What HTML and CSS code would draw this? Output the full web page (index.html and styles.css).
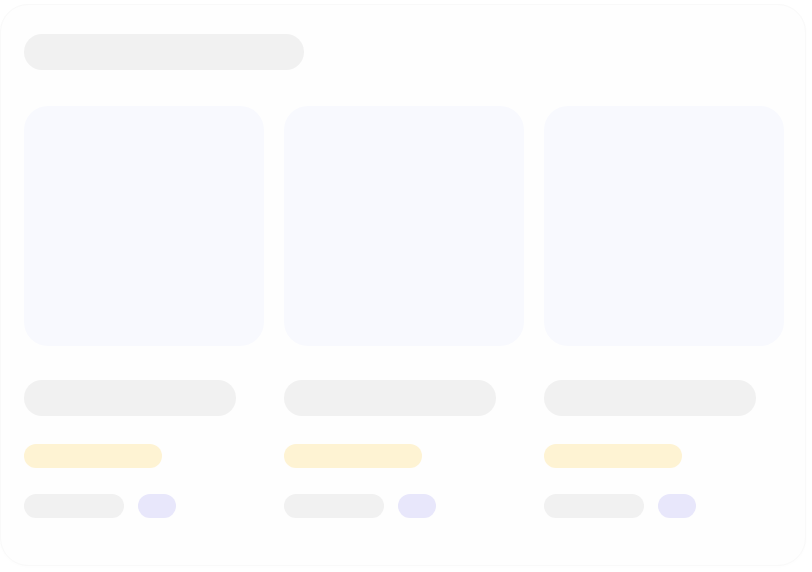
FILE: index.html
```html
<!DOCTYPE html>
<html lang="en">
<head>
    <meta charset="UTF-8">
    <title>Loading products</title>
    <link rel="stylesheet" href="styles.css">
</head>
<body>
    <div class="panel">
        <div class="skeleton heading-line"></div>

        <div class="product-grid">
            <div class="product-card">
                <div class="skeleton thumb"></div>
                <div class="skeleton name-line"></div>
                <div class="skeleton price-line"></div>
                <div class="meta-row">
                    <div class="skeleton meta-line"></div>
                    <div class="skeleton tag-pill"></div>
                </div>
            </div>
            <div class="product-card">
                <div class="skeleton thumb"></div>
                <div class="skeleton name-line"></div>
                <div class="skeleton price-line"></div>
                <div class="meta-row">
                    <div class="skeleton meta-line"></div>
                    <div class="skeleton tag-pill"></div>
                </div>
            </div>
            <div class="product-card">
                <div class="skeleton thumb"></div>
                <div class="skeleton name-line"></div>
                <div class="skeleton price-line"></div>
                <div class="meta-row">
                    <div class="skeleton meta-line"></div>
                    <div class="skeleton tag-pill"></div>
                </div>
            </div>
        </div>
    </div>
</body>
</html>
```

FILE: styles.css
```css
* {
    margin: 0;
    padding: 0;
    box-sizing: border-box;
    font-family: 'Liberation Sans', Arial, sans-serif;
}

body {
    background-color: #ffffff;
    padding: 4px 6px 6px 0;
}

/* Outer panel */
.panel {
    height: 562px;
    background: #fefefe;
    border: 1px solid #f9f9f9;
    border-radius: 28px;
    padding: 29px 21px 0 23px;
    box-shadow: 0 1px 4px rgba(0, 0, 0, 0.01);
}

.skeleton {
    background-color: #f1f1f1;
    border-radius: 999px;
}

.heading-line {
    width: 280px;
    height: 36px;
    margin-bottom: 36px;
}

/* Cards */
.product-grid {
    display: grid;
    grid-template-columns: repeat(3, 240px);
    gap: 20px;
}

.product-card {
    display: flex;
    flex-direction: column;
}

.thumb {
    width: 240px;
    height: 240px;
    border-radius: 24px;
    background-color: #f8f9fe;
}

.name-line {
    width: 212px;
    height: 36px;
    margin-top: 34px;
}

.price-line {
    width: 138px;
    height: 24px;
    margin-top: 28px;
    background-color: #fef3d3;
}

.meta-row {
    display: flex;
    gap: 14px;
    margin-top: 26px;
}

.meta-line {
    width: 100px;
    height: 24px;
}

.tag-pill {
    width: 38px;
    height: 24px;
    background-color: #e8e7fb;
}
```
